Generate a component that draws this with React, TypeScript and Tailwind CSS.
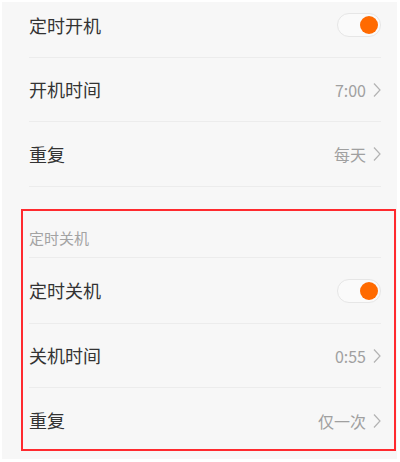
const font = { fontFamily: '"Noto Sans CJK SC", "Noto Sans", sans-serif' };

function Chevron() {
  return (
    <svg width="8" height="16" viewBox="0 0 8 16" fill="none" className="ml-[7px]">
      <polyline points="1,1.5 7,8 1,14.5" stroke="#b3b3b3" strokeWidth="1.2" />
    </svg>
  );
}

function Toggle() {
  return (
    <div className="flex h-[24px] w-[44px] items-center justify-end rounded-full border border-[#e6e6e6] bg-[#fafafa] pr-[2px]">
      <div className="h-[18px] w-[18px] rounded-full bg-[#ff6a00]" />
    </div>
  );
}

function Divider() {
  return <div className="h-px bg-[#ececec]" />;
}

function Row({ label, value, toggle, className }: { label: string; value?: string; toggle?: boolean; className: string }) {
  return (
    <div className={`flex items-center justify-between ${className}`}>
      <span className="text-[18px] text-[#333]">{label}</span>
      {toggle ? (
        <Toggle />
      ) : (
        <div className="flex items-center">
          <span className="text-[16px] text-[#a0a0a0]">{value}</span>
          <Chevron />
        </div>
      )}
    </div>
  );
}

export default function App() {
  return (
    <div className="h-[462px] w-[400px] bg-white pt-[2px] pb-[3px] pl-[2px] pr-[3px]" style={font}>
      <div className="h-full overflow-hidden bg-[#f7f7f7]">
        <div className="pl-[27px] pr-[16px]">
          <Row label="定时开机" toggle className="h-[55px] pb-[9px]" />
          <Divider />
          <Row label="开机时间" value="7:00" className="h-[63px]" />
          <Divider />
          <Row label="重复" value="每天" className="h-[64px]" />
          <Divider />
        </div>

        <div className="mt-[22px] ml-[19px] mr-[1px] border-2 border-[#ff2a2f] pl-[6px] pr-[13px]">
          <div className="flex h-[46px] items-center pt-[8px] text-[15px] text-[#a3a3a3]">定时关机</div>
          <Divider />
          <Row label="定时关机" toggle className="h-[65px]" />
          <Divider />
          <Row label="关机时间" value="0:55" className="h-[63px]" />
          <Divider />
          <Row label="重复" value="仅一次" className="h-[61px] pt-[4px]" />
        </div>
      </div>
    </div>
  );
}
